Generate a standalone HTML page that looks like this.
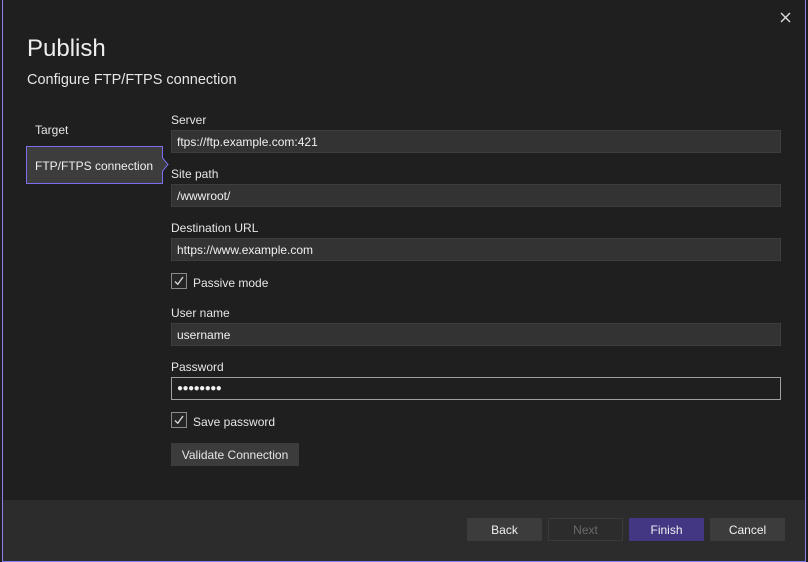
<!DOCTYPE html>
<html><head><style>
*{margin:0;padding:0;box-sizing:border-box}
body{width:808px;height:562px;background:#1e1e1e;font-family:"Liberation Sans",sans-serif;color:#e6e6e6;position:relative;overflow:hidden;font-size:12px}
.dlg{position:absolute;left:2px;top:-1px;width:804px;height:563px;border:1px solid #8a7ff0;background:#1f1f1f}
.a{position:absolute}
.lbl{position:absolute;left:171px;font-size:12px;color:#e6e6e6}
.inp{position:absolute;left:171px;width:610px;height:23px;background:#333;border:1px solid #3d3d3d;padding-left:5px;line-height:22px;font-size:12px;color:#f0f0f0}
.cb{position:absolute;left:171px;width:16px;height:16px;border:1px solid #8a8a8a;background:#252525}
.cb svg{position:absolute;left:2px;top:2px}
.btn{position:absolute;top:518px;width:75px;height:23px;background:#3c3c3c;text-align:center;line-height:24px;font-size:12px;color:#f0f0f0}
</style></head><body>
<div class="dlg"></div>
<div class="a" style="left:3px;top:500px;width:802px;height:61px;background:#2c2c2c"></div>
<svg class="a" style="left:780px;top:12px" width="11" height="11"><path d="M1 1L10 10M10 1L1 10" stroke="#ddd" stroke-width="1.4"/></svg>
<div class="a" style="left:27px;top:35px;font-size:24px;color:#eee">Publish</div>
<div class="a" style="left:27px;top:72px;font-size:14.5px;color:#e6e6e6">Configure FTP/FTPS connection</div>
<div class="a" style="left:35px;top:123px">Target</div>
<svg class="a" style="left:26px;top:146px" width="144" height="39"><path d="M0.5 0.5H136.5V12L142 18.5L136.5 25V37.5H0.5Z" fill="#3d3d3d" stroke="#7b6ff0"/></svg>
<div class="a" style="left:35px;top:159px;color:#f0f0f0">FTP/FTPS connection</div>
<div class="lbl" style="top:113px">Server</div>
<div class="inp" style="top:130px">ftps://ftp.example.com:421</div>
<div class="lbl" style="top:167px">Site path</div>
<div class="inp" style="top:184px">/wwwroot/</div>
<div class="lbl" style="top:221px">Destination URL</div>
<div class="inp" style="top:238px">https://www.example.com</div>
<div class="cb" style="top:273px"><svg width="10" height="10"><path d="M1 5.5L3.8 8.3L9 1" stroke="#ddd" stroke-width="1.3" fill="none"/></svg></div>
<div class="a" style="left:193px;top:276px">Passive mode</div>
<div class="lbl" style="top:306px">User name</div>
<div class="inp" style="top:323px">username</div>
<div class="lbl" style="top:360px">Password</div>
<div class="inp" style="top:377px;background:#1f1f1f;border-color:#a0a0a0;letter-spacing:-0.5px;font-size:10px">●●●●●●●●</div>
<div class="cb" style="top:412px"><svg width="10" height="10"><path d="M1 5.5L3.8 8.3L9 1" stroke="#ddd" stroke-width="1.3" fill="none"/></svg></div>
<div class="a" style="left:193px;top:415px">Save password</div>
<div class="a" style="left:171px;top:443px;width:128px;height:23px;background:#3c3c3c;text-align:center;line-height:24px">Validate Connection</div>
<div class="btn" style="left:467px">Back</div>
<div class="btn" style="left:548px;background:#2c2c2c;border:1px solid #3a3a3a;color:#6a6a6a;line-height:22px">Next</div>
<div class="btn" style="left:629px;background:#433683">Finish</div>
<div class="btn" style="left:710px">Cancel</div>
</body></html>
